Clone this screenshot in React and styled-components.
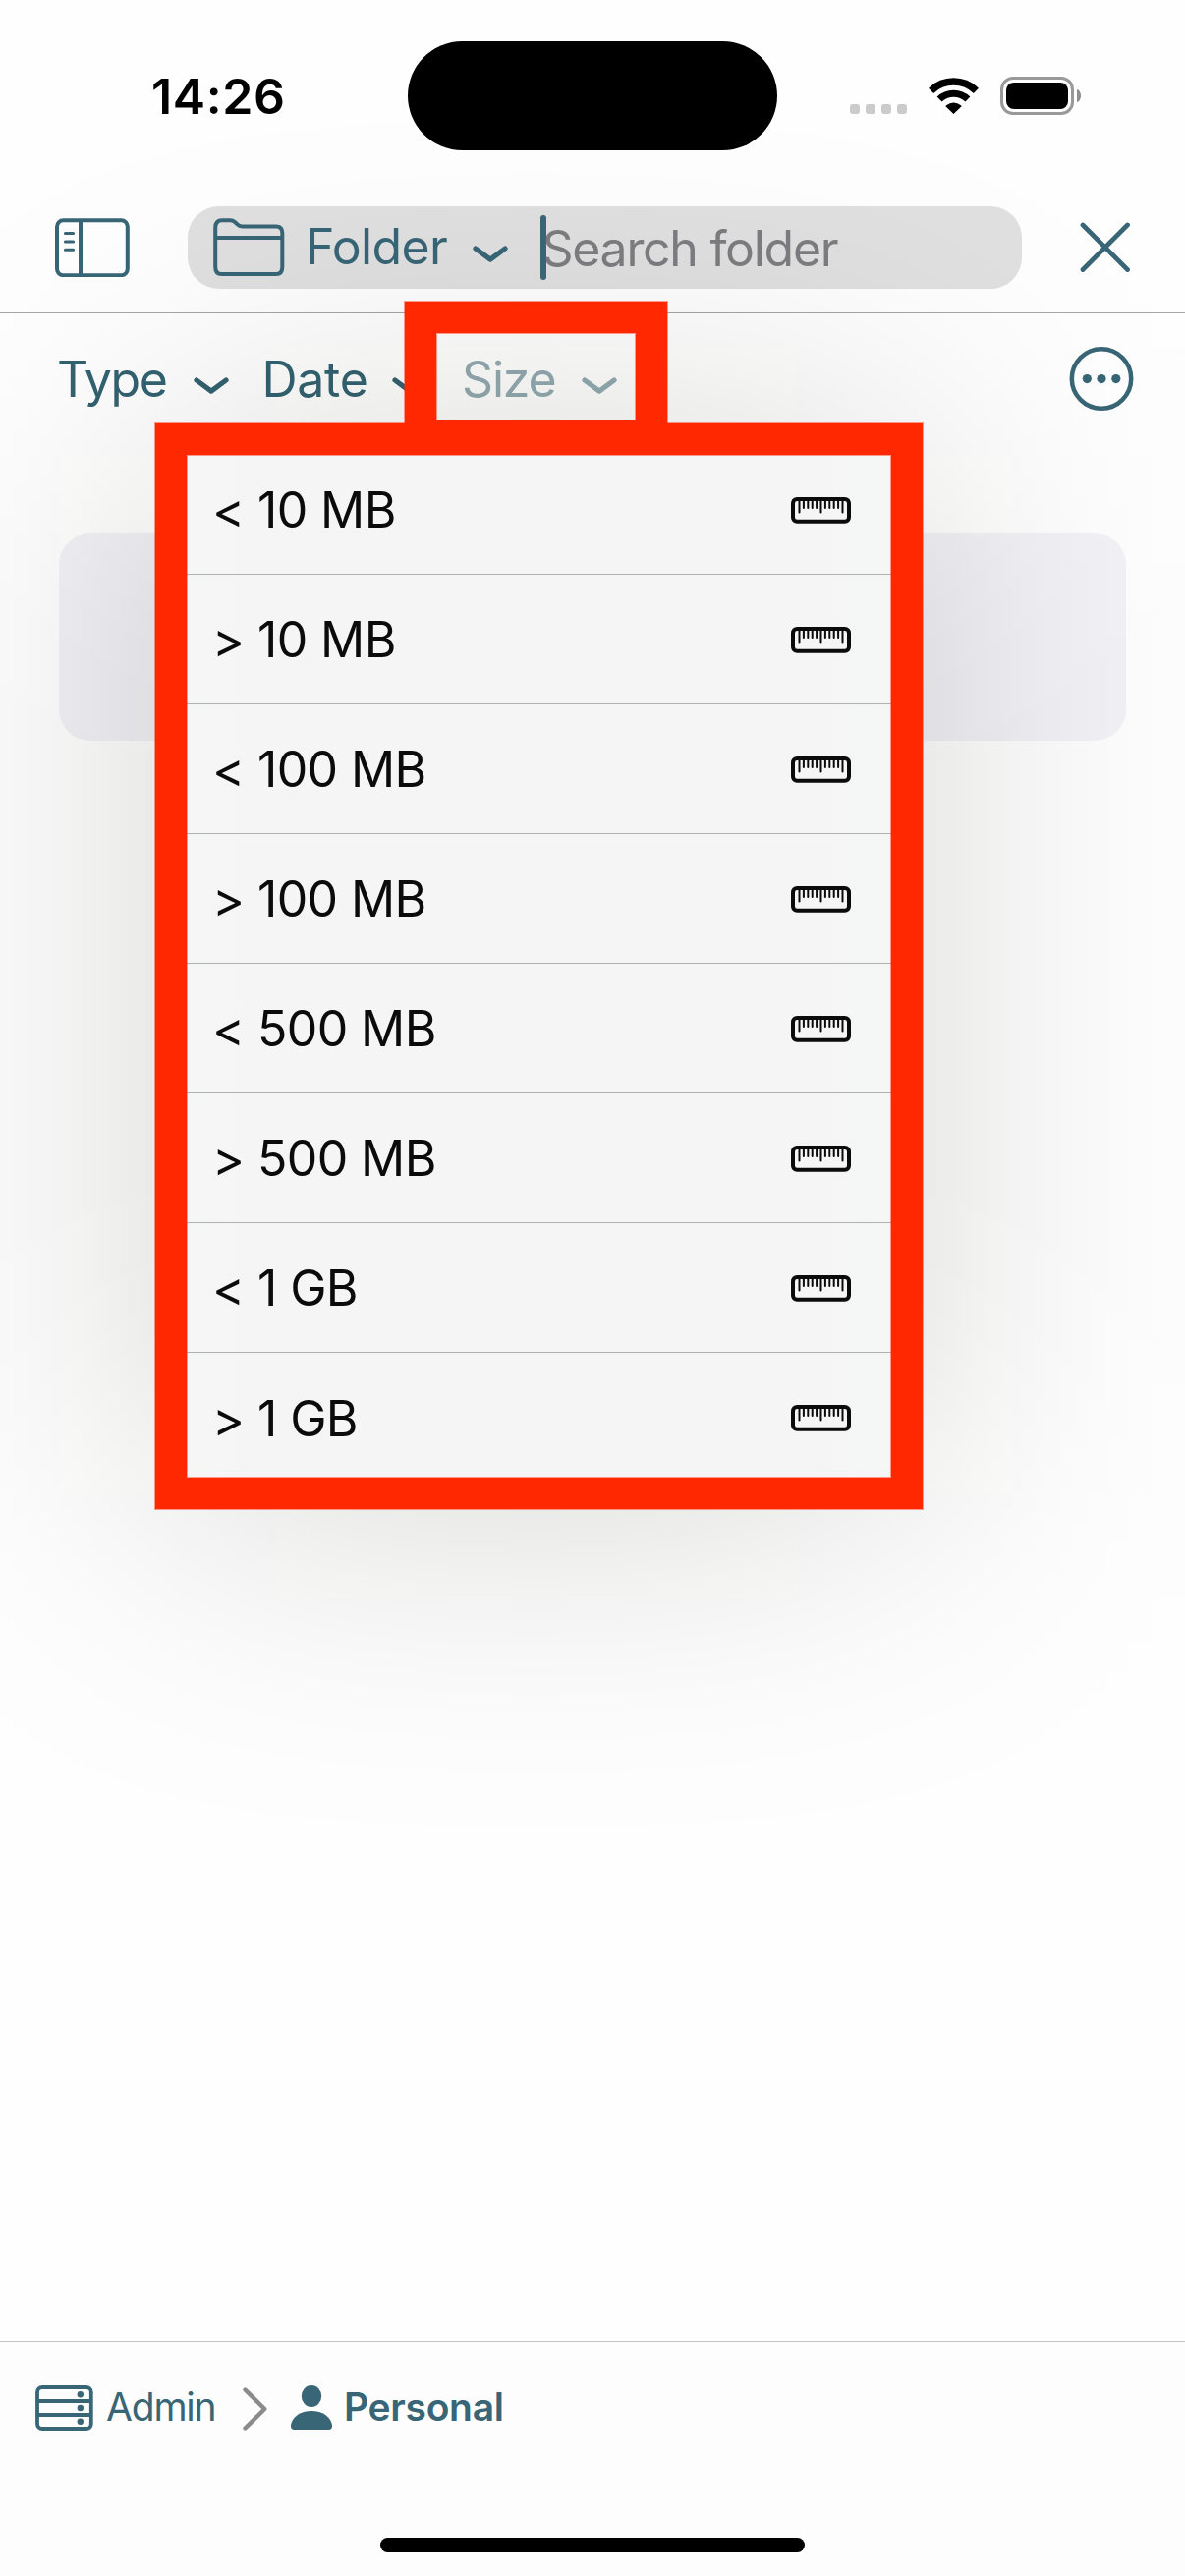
import React from "react";
import styled, { createGlobalStyle } from "styled-components";

const TEAL = "#386676";
const RED = "#ff2800";

const GlobalStyle = createGlobalStyle`
  *, *::before, *::after { box-sizing: border-box; }
  body {
    margin: 0;
    background: #fff;
    font-family: Inter, "Liberation Sans", sans-serif;
  }
  svg { display: block; flex: none; }
`;

const Screen = styled.div`
  position: relative;
  width: 1206px;
  height: 2622px;
  display: flex;
  flex-direction: column;
  background: #fefefe;
  overflow: hidden;
`;

const Label = styled.span`
  flex: none;
  display: block;
  width: ${(p) => (p.$width ? `${p.$width}px` : "auto")};
  font-size: ${(p) => p.$size || 50}px;
  line-height: ${(p) => (p.$size ? 47 : 60)}px;
  font-weight: ${(p) => p.$weight || 400};
  letter-spacing: ${(p) => p.$track || 0}px;
  color: ${(p) => p.$color || TEAL};
  white-space: pre;
`;

/* Status bar */
const StatusBar = styled.div`
  flex: none;
  height: 183px;
  display: grid;
  grid-template-columns: 415px 376px 415px;
`;

const TimeCell = styled.div`
  padding: 68px 0 0 154px;
`;

const Island = styled.div`
  height: 111px;
  margin-top: 42px;
  border-radius: 56px;
  background: #000;
  z-index: 1;
`;

const StatusIcons = styled.div`
  display: flex;
  align-items: flex-start;
  padding: 78px 0 0 74px;
`;

const Signal = styled.div`
  display: flex;
  gap: 6px;
  padding-top: 28px;
  margin-right: 21px;
`;

const SignalDot = styled.i`
  width: 10px;
  height: 10px;
  border-radius: 3px;
  background: #cbcbcb;
`;

const Battery = styled.div`
  display: flex;
  align-items: center;
  gap: 3px;
  margin-left: 21px;
`;

const BatteryShell = styled.div`
  width: 75px;
  height: 39px;
  padding: 3px;
  border: 3px solid #999;
  border-radius: 13px;
`;

const BatteryFill = styled.div`
  height: 100%;
  border-radius: 8px;
  background: #000;
`;

const BatteryTip = styled.div`
  width: 4px;
  height: 13px;
  border-radius: 0 4px 4px 0 / 0 6.5px 6.5px 0;
  background: #8e8e8e;
`;

/* Toolbar */
const Toolbar = styled.header`
  flex: none;
  height: 136px;
  display: flex;
  align-items: center;
  padding: 27px 0 24px 56px;
  border-bottom: 1px solid #a6a6a6;
`;

const SearchField = styled.div`
  flex: none;
  width: 849px;
  height: 84px;
  margin: 0 59px 0 59px;
  padding-left: 26px;
  display: flex;
  align-items: center;
  border-radius: 32px;
  background: #e0e0e1;
`;

const Scope = styled.div`
  display: flex;
  align-items: center;
  width: 333px;
`;

const ScopeName = styled.div`
  margin: -2px 0 0 21px;
  width: 170px;
`;

const ChevronDrop = styled.span`
  padding-top: ${(p) => p.$drop}px;
`;

const Caret = styled.i`
  flex: none;
  width: 6px;
  height: 66px;
  margin-right: -4.5px;
  border-radius: 3px;
  background: ${TEAL};
  z-index: 1;
`;

const Placeholder = styled.div`
  padding-top: 2px;
`;

/* Filters */
const FilterRow = styled.nav`
  flex: none;
  height: 224px;
  display: flex;
  align-items: flex-start;
  padding: 34px 52px 0 58px;
`;

const Filter = styled.div`
  flex: none;
  width: ${(p) => p.$width}px;
  display: flex;
  padding-top: 3px;
`;

const FilterChevron = styled.span`
  padding-top: 28px;
`;

const MoreSlot = styled.div`
  margin-left: auto;
`;

const Card = styled.section`
  flex: none;
  height: 211px;
  margin: 0 60px;
  border-radius: 32px;
  background: #f2f2f7;
`;

const Spacer = styled.div`
  flex: 1;
`;

/* Footer */
const Footer = styled.footer`
  flex: none;
  height: 239px;
  display: flex;
  flex-direction: column;
  justify-content: space-between;
  border-top: 1px solid #c5c5c7;
  background: #fdfdfd;
`;

const Breadcrumb = styled.div`
  display: flex;
  align-items: flex-start;
  padding: 42px 0 0 36px;
`;

const CrumbIcon = styled.span`
  padding-top: ${(p) => p.$top}px;
  width: ${(p) => p.$width}px;
`;

const HomeIndicator = styled.div`
  width: 432px;
  height: 15px;
  margin: 0 auto 24px;
  border-radius: 8px;
  background: #000;
`;

/* Floating menu */
const MenuShade = styled.div`
  position: absolute;
  left: 171px;
  top: 463px;
  width: 750px;
  height: 1056px;
  background: rgba(12, 12, 0, 0.18);
  filter: blur(165px);
`;

const Menu = styled.ul`
  position: absolute;
  left: 171px;
  top: 453px;
  width: 750px;
  margin: 0;
  padding: 0;
  list-style: none;
  border-radius: 39px;
  background: linear-gradient(90deg, #f4f6f4 0, #f5f5f5 90px, #f5f5f5 660px, #f4f6f5 100%);
`;

const MenuItem = styled.li`
  height: 132px;
  display: flex;
  align-items: center;
  justify-content: space-between;
  padding: 1px 55px 0 45px;
  border-bottom: 1px solid #b0b2b2;
  &:last-child { border-bottom: 0; }
`;

const Highlight = styled.div`
  position: absolute;
  left: ${(p) => p.$x}px;
  top: ${(p) => p.$y}px;
  width: ${(p) => p.$w}px;
  height: ${(p) => p.$h}px;
  border: 32px solid ${RED};
  box-shadow: 0 0 0 1px rgba(255, 40, 0, 0.45), inset 0 0 0 1px rgba(255, 40, 0, 0.45);
`;

const Chevron = ({ color = TEAL }) => (
  <svg width="36" height="18" viewBox="0 0 36 18">
    <path d="M3 3 L18 14.2 L33 3" fill="none" stroke={color} strokeWidth="5.2" strokeLinecap="round" strokeLinejoin="round" />
  </svg>
);

const WifiIcon = () => (
  <svg width="53" height="40" viewBox="0 0 53 40">
    <g fill="none" stroke="#000">
      <path d="M3.6 14.3 A33 33 0 0 1 49.4 14.3" strokeWidth="7.4" />
      <path d="M12.1 23 A20.8 20.8 0 0 1 40.9 23" strokeWidth="7" />
    </g>
    <path d="M26.5 38 L18.7 30.6 Q18.2 29.8 19 29.2 Q26.5 23.8 34 29.2 Q34.8 29.8 34.3 30.6 Z" />
  </svg>
);

const SidebarIcon = () => (
  <svg width="76" height="60" viewBox="0 0 76 60" fill="none" stroke={TEAL}>
    <rect x="2" y="2.2" width="71.8" height="56" rx="6.5" strokeWidth="4" />
    <path d="M26 2 V58" strokeWidth="4" />
    <path d="M10.4 15.5 H18.6 M10.4 24 H18.6 M10.4 32.3 H18.6" strokeWidth="3" strokeLinecap="round" />
  </svg>
);

const FolderIcon = () => (
  <svg width="73" height="60" viewBox="0 0 73 60" fill="none" stroke={TEAL} strokeWidth="4" strokeLinejoin="round">
    <path d="M2.2 10 Q2.2 2.3 9 2.3 H17 Q20 2.3 22 4 L25 6.7 Q27 8.4 30 8.4 H64 Q70.3 8.4 70.3 15 V50 Q70.3 57 64 57 H8.6 Q2.2 57 2.2 50 Z" />
    <path d="M2.2 20 H70.3" />
  </svg>
);

const CloseIcon = () => (
  <svg width="52" height="52" viewBox="0 0 52 52">
    <path d="M3 3 L48.5 48.5 M48.5 3 L3 48.5" stroke={TEAL} strokeWidth="4.8" strokeLinecap="round" />
  </svg>
);

const MoreIcon = () => (
  <svg width="66" height="66" viewBox="0 0 66 66">
    <circle cx="33" cy="32.5" r="30.2" fill="none" stroke={TEAL} strokeWidth="4.5" />
    <g fill={TEAL}>
      <circle cx="18.3" cy="32.6" r="4.6" />
      <circle cx="33" cy="32.6" r="4.6" />
      <circle cx="47.8" cy="32.6" r="4.6" />
    </g>
  </svg>
);

const RULER_TICKS = Array.from({ length: 11 }, (_, i) => i);

const RulerIcon = () => (
  <svg width="61" height="27" viewBox="0 0 61 27" stroke="#0b0b0b" fill="none">
    <rect x="2" y="2" width="57" height="22.8" rx="4.2" strokeWidth="4" />
    {RULER_TICKS.map((i) => (
      <path key={i} d={`M${8.5 + i * 4.4} 3 V${i % 5 === 0 ? 15.5 : 11}`} strokeWidth="2" strokeLinecap="round" />
    ))}
  </svg>
);

const ServerIcon = () => (
  <svg width="59" height="47" viewBox="0 0 59 47">
    <g fill="none" stroke={TEAL} strokeWidth="3.8">
      <rect x="2" y="2" width="54.8" height="42" rx="5" />
      <path d="M2 16 H57 M2 30 H57" />
    </g>
    <g fill={TEAL}>
      <circle cx="45.8" cy="9.2" r="3.2" />
      <circle cx="45.8" cy="23" r="3.2" />
      <circle cx="45.8" cy="36.8" r="3.2" />
    </g>
  </svg>
);

const CrumbArrow = () => (
  <svg width="26" height="45" viewBox="0 0 26 45">
    <path d="M2.5 2.5 L22.3 22 L2.5 41.5" fill="none" stroke="#8b8b8e" strokeWidth="4.4" strokeLinecap="round" strokeLinejoin="round" />
  </svg>
);

const PersonIcon = () => (
  <svg width="43" height="46" viewBox="0 0 43 46" fill={TEAL}>
    <ellipse cx="21" cy="11" rx="10.2" ry="11" />
    <path d="M0 40.5 C1 32 10 26 21 26 C32 26 41 32 42 40.5 Q42.4 45 38.5 45 H3.5 Q-0.4 45 0 40.5 Z" />
  </svg>
);

const FILTERS = [
  { name: "Type", slot: 208.5, label: 138.5, track: -1.4 },
  { name: "Date", slot: 203.5, label: 132.5, track: -0.3 },
  { name: "Size", slot: 160, label: 122, track: -1.2, color: "#92aab1" },
];

const SIZES = ["< 10 MB", "> 10 MB", "< 100 MB", "> 100 MB", "< 500 MB", "> 500 MB", "< 1 GB", "> 1 GB"];

export default function App() {
  return (
    <Screen>
      <GlobalStyle />
      <StatusBar>
        <TimeCell>
          <Label $weight={600} $track={0.6} $color="#000">14:26</Label>
        </TimeCell>
        <Island />
        <StatusIcons>
          <Signal>
            <SignalDot />
            <SignalDot />
            <SignalDot />
            <SignalDot />
          </Signal>
          <WifiIcon />
          <Battery>
            <BatteryShell>
              <BatteryFill />
            </BatteryShell>
            <BatteryTip />
          </Battery>
        </StatusIcons>
      </StatusBar>

      <Toolbar>
        <SidebarIcon />
        <SearchField>
          <Scope>
            <FolderIcon />
            <ScopeName>
              <Label $track={-0.7}>Folder</Label>
            </ScopeName>
            <ChevronDrop $drop={13}>
              <Chevron />
            </ChevronDrop>
          </Scope>
          <Caret />
          <Placeholder>
            <Label $track={-1.3} $color="#7d7d81">Search folder</Label>
          </Placeholder>
        </SearchField>
        <CloseIcon />
      </Toolbar>

      <FilterRow>
        {FILTERS.map((f) => (
          <Filter key={f.name} $width={f.slot}>
            <Label $width={f.label} $track={f.track} $color={f.color || "#336271"}>{f.name}</Label>
            <FilterChevron>
              <Chevron color={f.color || "#336271"} />
            </FilterChevron>
          </Filter>
        ))}
        <MoreSlot>
          <MoreIcon />
        </MoreSlot>
      </FilterRow>

      <Card />
      <Spacer />

      <Footer>
        <Breadcrumb>
          <CrumbIcon $top={2} $width={72}>
            <ServerIcon />
          </CrumbIcon>
          <Label $size={39} $width={139} $track={-1.2}>Admin</Label>
          <CrumbIcon $top={4} $width={49}>
            <CrumbArrow />
          </CrumbIcon>
          <CrumbIcon $top={2} $width={54}>
            <PersonIcon />
          </CrumbIcon>
          <Label $size={39} $weight={600} $track={-0.3}>Personal</Label>
        </Breadcrumb>
        <HomeIndicator />
      </Footer>

      <MenuShade />
      <Menu>
        {SIZES.map((s) => (
          <MenuItem key={s}>
            <Label $color="#0b0b0b" $track={-0.6}>{s}</Label>
            <RulerIcon />
          </MenuItem>
        ))}
      </Menu>

      <Highlight $x={412} $y={307} $w={267} $h={153} />
      <Highlight $x={158} $y={431} $w={781} $h={1105} />
    </Screen>
  );
}
